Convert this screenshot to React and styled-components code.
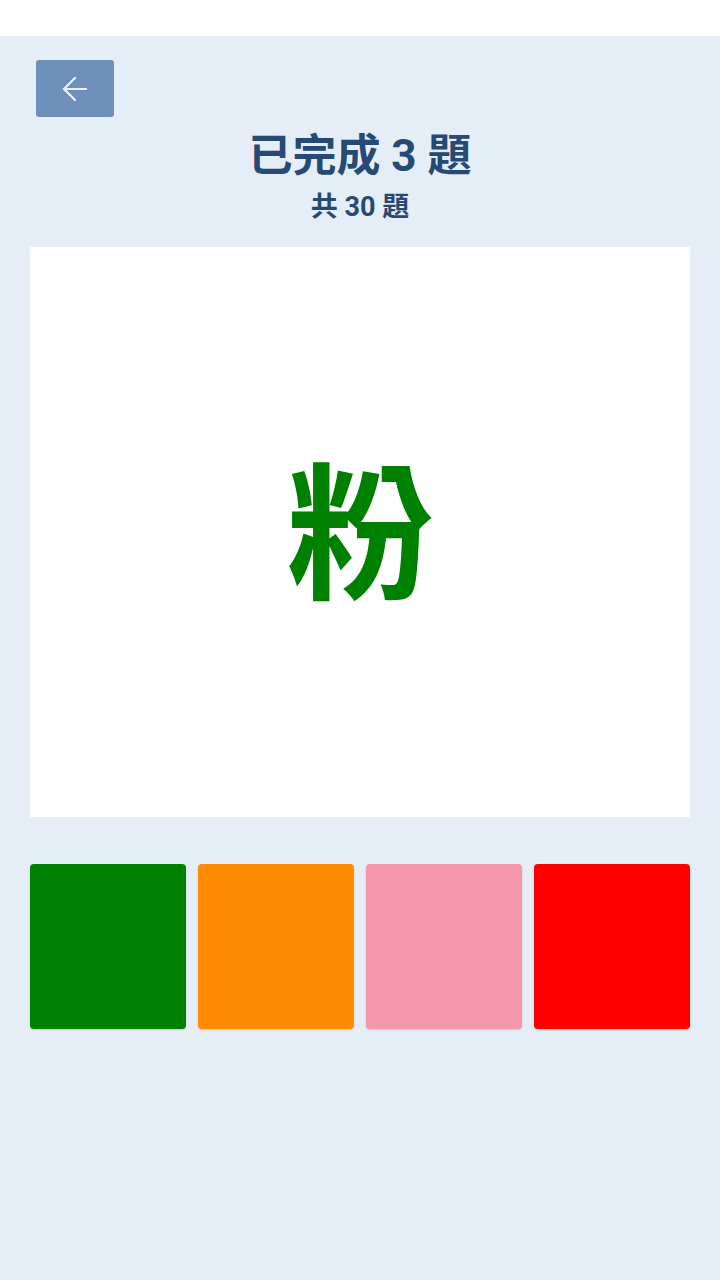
import React from "react";
import styled, { createGlobalStyle } from "styled-components";
import { ArrowLeft } from "lucide-react";

const Global = createGlobalStyle`
  html, body { margin: 0; padding: 0; }
  body {
    background: #e5edf7;
    font-family: Roboto, "Noto Sans CJK TC", sans-serif;
  }
`;

const StatusBar = styled.div`
  height: 36px;
  background: #ffffff;
`;

const Main = styled.main`
  min-height: 1244px;
  background: #e5edf7;
  padding: 24px 30px 0;
  box-sizing: border-box;
  display: flex;
  flex-direction: column;
`;

const BackButton = styled.button`
  width: 78px;
  height: 57px;
  margin-left: 6px;
  border: none;
  border-radius: 3px;
  background: #6e8fba;
  color: #eef3fa;
  display: flex;
  align-items: center;
  justify-content: center;
  padding: 0;
  cursor: pointer;
`;

const Header = styled.header`
  display: flex;
  flex-direction: column;
  align-items: center;
  color: #264a73;
  font-weight: 700;
  margin-top: 12px;
`;

const Title = styled.h1`
  margin: 0;
  font-size: 44px;
  line-height: 54px;
  font-weight: 700;
`;

const Subtitle = styled.h2`
  margin: 4px 0 0;
  font-size: 27px;
  line-height: 40px;
  font-weight: 700;
`;

const Card = styled.section`
  margin-top: 20px;
  height: 570px;
  background: #ffffff;
  display: flex;
  align-items: center;
  justify-content: center;
`;

const Word = styled.span`
  margin-top: 10px;
  font-size: 147px;
  font-weight: 700;
  color: ${(p) => p.$color};
  line-height: 1;
`;

const Choices = styled.div`
  margin-top: 47px;
  display: grid;
  grid-template-columns: repeat(4, 1fr);
  gap: 12px;
`;

const Choice = styled.button`
  height: 165px;
  border: none;
  border-radius: 4px;
  background: ${(p) => p.$color};
  box-shadow: 0 1px 2px rgba(0, 0, 0, 0.15);
  padding: 0;
  cursor: pointer;
`;

const colors = ["#008000", "#ff8c00", "#f497aa", "#ff0000"];

export default function App() {
  return (
    <>
      <Global />
      <StatusBar />
      <Main>
        <BackButton aria-label="back">
          <ArrowLeft size={38} strokeWidth={1.4} />
        </BackButton>
        <Header>
          <Title>已完成 3 題</Title>
          <Subtitle>共 30 題</Subtitle>
        </Header>
        <Card>
          <Word $color="#008000">粉</Word>
        </Card>
        <Choices>
          {colors.map((c) => (
            <Choice key={c} $color={c} />
          ))}
        </Choices>
      </Main>
    </>
  );
}
